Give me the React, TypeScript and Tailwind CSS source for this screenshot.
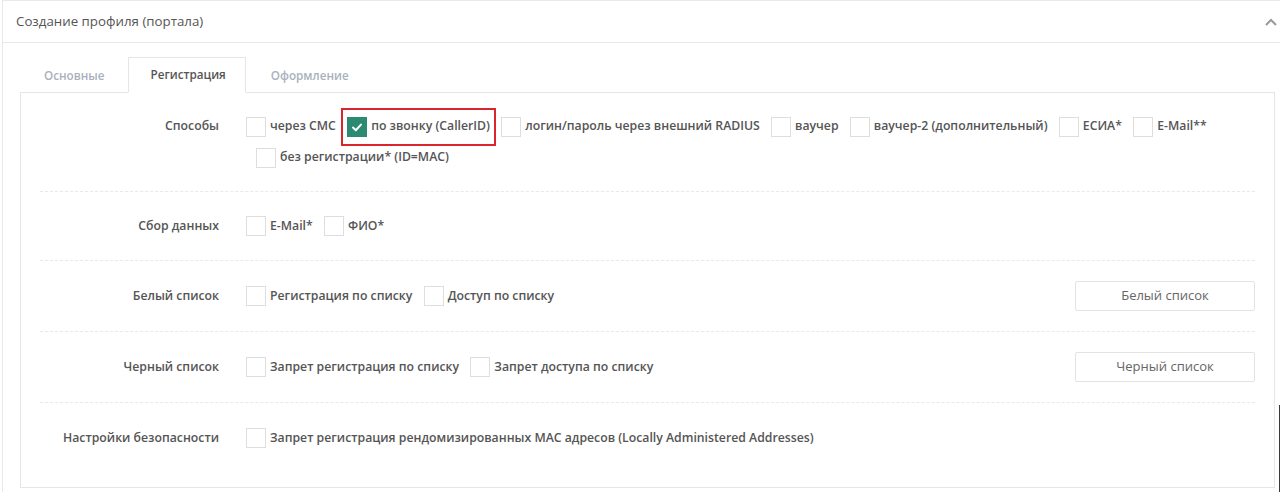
import React from 'react'

type Option = { label: string; checked?: boolean; marked?: boolean }

function Box({ checked }: { checked?: boolean }): React.ReactElement {
  if (checked) {
    return (
      <span className="flex h-[20px] w-[20px] shrink-0 items-center justify-center bg-[#2b8a72]">
        <svg viewBox="0 0 20 20" className="h-[20px] w-[20px]" fill="none" stroke="#fff" strokeWidth="2" strokeLinecap="round" strokeLinejoin="round">
          <polyline points="6,10.5 8.8,13.2 14,7.6" />
        </svg>
      </span>
    )
  }
  return <span className="h-[20px] w-[20px] shrink-0 border border-[#dedede] bg-white" />
}

function Item({ label, checked, marked }: Option): React.ReactElement {
  const inner = (
    <span className="flex items-center gap-[4px]">
      <Box checked={checked} />
      <span className="whitespace-nowrap text-[12.25px] font-semibold text-[#555]">{label}</span>
    </span>
  )
  if (marked) {
    return (
      <span className="-mx-[6px] flex h-[38px] items-center border-2 border-[#d9262c] px-[4px]">
        {inner}
      </span>
    )
  }
  return inner
}

function Line({ items, indent }: { items: Option[]; indent?: boolean }): React.ReactElement {
  return (
    <div className={`flex h-[31px] items-center gap-x-[11.3px] ${indent ? 'pl-[10px]' : ''}`}>
      {items.map((o) => (
        <Item key={o.label} {...o} />
      ))}
    </div>
  )
}

function Row({
  label,
  height,
  last,
  children,
  action
}: {
  label: string
  height: string
  last?: boolean
  children: React.ReactNode
  action?: string
}): React.ReactElement {
  return (
    <div className={`flex items-center ${height} ${last ? '' : 'border-b border-dashed border-[#e9e9e9]'}`}>
      <div className="flex items-start">
        <div className="flex h-[31px] w-[180px] shrink-0 items-center justify-end pr-px text-[12.25px] font-semibold text-[#555]">
          {label}
        </div>
        <div className="ml-[26px] flex flex-col">{children}</div>
      </div>
      {action && (
        <button className="ml-auto h-[30px] w-[180px] rounded-[2px] border border-[#e3e3e3] bg-white text-[13px] text-[#666]">
          {action}
        </button>
      )}
    </div>
  )
}

export default function App(): React.ReactElement {
  return (
    <div className="relative h-[492px] w-[1280px] overflow-hidden bg-white font-['Open_Sans',sans-serif] text-[#555]">
      <div className="ml-[2px] w-[1291px] border border-[#e8e8e8]">
        {/* Header */}
        <div className="flex h-[42px] items-center justify-between border-b border-[#e8e8e8] pl-[13px] pr-[15px]">
          <span className="text-[13.3px] text-[#555]">Создание профиля (портала)</span>
          <svg viewBox="0 0 12 8" className="h-[8px] w-[12px]" fill="none" stroke="#9a9a9a" strokeWidth="2">
            <polyline points="1,7 6,2 11,7" />
          </svg>
        </div>

        {/* Body */}
        <div className="px-[17px] pt-[14px] pb-[40px]">
          {/* Tabs */}
          <div className="relative z-10 -mb-px ml-px flex h-[36px]">
            <div className="flex items-center px-[23px] pt-[1px] text-[11.7px] font-semibold text-[#a9b1bd]">Основные</div>
            <div className="flex items-center border border-b-white border-[#e6e6e6] bg-white pl-[22px] pr-[19px] text-[11.7px] font-semibold text-[#555]">
              Регистрация
            </div>
            <div className="flex items-center px-[25px] pt-[1px] text-[11.7px] font-semibold text-[#a9b1bd]">Оформление</div>
          </div>

          {/* Content */}
          <div className="border border-[#e6e6e6] px-[19px] pb-[14px]">
            <Row label="Способы" height="h-[99px]">
              <Line
                items={[
                  { label: 'через СМС' },
                  { label: 'по звонку (CallerID)', checked: true, marked: true },
                  { label: 'логин/пароль через внешний RADIUS' },
                  { label: 'ваучер' },
                  { label: 'ваучер-2 (дополнительный)' },
                  { label: 'ЕСИА*' },
                  { label: 'E-Mail**' }
                ]}
              />
              <Line indent items={[{ label: 'без регистрации* (ID=MAC)' }]} />
            </Row>
            <Row label="Сбор данных" height="h-[69px]">
              <Line items={[{ label: 'E-Mail*' }, { label: 'ФИО*' }]} />
            </Row>
            <Row label="Белый список" height="h-[71px]" action="Белый список">
              <Line items={[{ label: 'Регистрация по списку' }, { label: 'Доступ по списку' }]} />
            </Row>
            <Row label="Черный список" height="h-[71px]" action="Черный список">
              <Line items={[{ label: 'Запрет регистрация по списку' }, { label: 'Запрет доступа по списку' }]} />
            </Row>
            <Row label="Настройки безопасности" height="h-[70px]" last>
              <Line items={[{ label: 'Запрет регистрация рендомизированных MAC адресов (Locally Administered Addresses)' }]} />
            </Row>
          </div>
        </div>
      </div>
      <div className="absolute right-0 top-[405px] h-[87px] w-px bg-[#3a3a3a]" />
    </div>
  )
}
